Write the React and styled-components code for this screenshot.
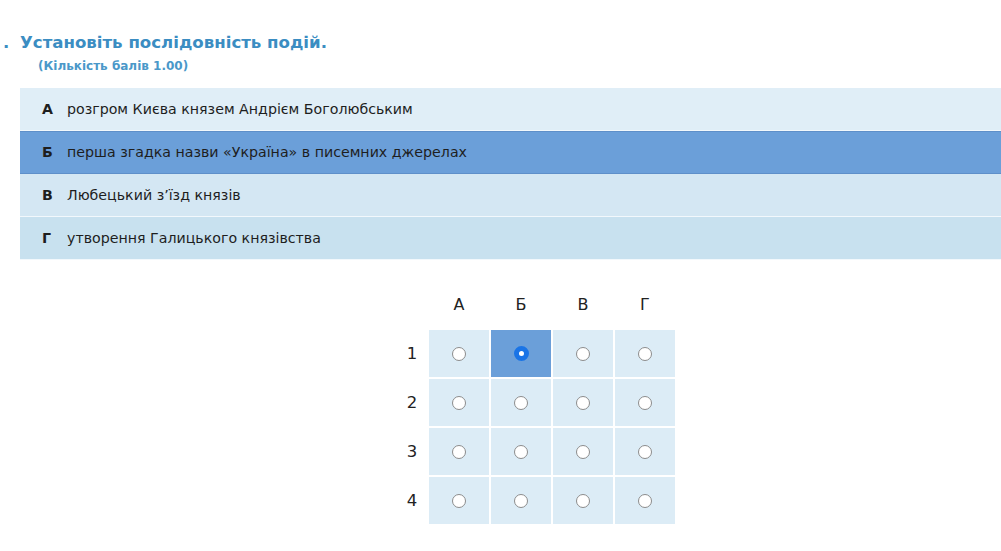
import styled, { createGlobalStyle } from "styled-components";

const GlobalStyle = createGlobalStyle`
  html, body {
    margin: 0;
    padding: 0;
    background: #fff;
    overflow: hidden;
  }
  body {
    font-family: "DejaVu Sans", Verdana, sans-serif;
    color: #222;
  }
`;

const events = [
  { letter: "А", text: "розгром Києва князем Андрієм Боголюбським", bg: "#e0eef7" },
  { letter: "Б", text: "перша згадка назви «Україна» в писемних джерелах", bg: "#6b9fd9", active: true },
  { letter: "В", text: "Любецький з’їзд князів", bg: "#d4e7f3" },
  { letter: "Г", text: "утворення Галицького князівства", bg: "#c8e1ef" },
];

const letters = ["А", "Б", "В", "Г"];
const answers = { 1: 1 };

const App = () => {
  return (
    <>
      <GlobalStyle />
      <Page>
        <Header>
          <Title>
            <Dot>.</Dot>Установіть послідовність подій.
          </Title>
          <Points>(Кількість балів 1.00)</Points>
        </Header>

        <EventList>
          {events.map((e) => (
            <EventRow key={e.letter} $bg={e.bg} $active={e.active}>
              <Letter>{e.letter}</Letter>
              <span>{e.text}</span>
            </EventRow>
          ))}
        </EventList>

        <MatrixWrap>
          <Matrix>
            <Corner />
            {letters.map((l) => (
              <ColHead key={l}>{l}</ColHead>
            ))}
            {[1, 2, 3, 4].map((n) => (
              <Row key={n} n={n} />
            ))}
          </Matrix>
        </MatrixWrap>
      </Page>
    </>
  );
};

const Row = ({ n }) => (
  <>
    <RowHead>{n}</RowHead>
    {letters.map((l, i) => {
      const on = answers[n] === i;
      return (
        <Cell key={l} $on={on}>
          <Radio $on={on} />
        </Cell>
      );
    })}
  </>
);

export default App;

// STYLING

const Page = styled.div`
  width: 1032px;
  padding: 30px 0 0 20px;
`;

const Header = styled.div`
  margin-left: -17px;
  margin-bottom: 13px;
`;

const Title = styled.h1`
  margin: 0;
  font-size: 16.6px;
  font-weight: 700;
  color: #3b8dc2;
  line-height: 26px;
`;

const Dot = styled.span`
  display: inline-block;
  width: 17px;
`;

const Points = styled.div`
  margin-left: 35px;
  margin-top: 1px;
  font-size: 12px;
  font-weight: 700;
  color: #4a98c9;
  line-height: 18px;
`;

const EventList = styled.div`
  display: flex;
  flex-direction: column;
`;

const EventRow = styled.div`
  box-sizing: border-box;
  height: 43px;
  display: flex;
  align-items: center;
  padding-left: 22px;
  font-size: 14.2px;
  background: ${(p) => p.$bg};
  border-bottom: 1px solid ${(p) => (p.$active ? "#5e8fc9" : "#f2f8fc")};
  box-shadow: ${(p) => (p.$active ? "inset 0 1px 0 #5e8fc9" : "none")};
  color: #1e1e1e;
`;

const Letter = styled.span`
  width: 25px;
  font-weight: 700;
`;

const MatrixWrap = styled.div`
  display: flex;
  justify-content: center;
  padding-top: 26px;
`;

const Matrix = styled.div`
  display: grid;
  grid-template-columns: 30px repeat(4, 60px);
  grid-template-rows: 42px repeat(4, 47px);
  gap: 2px;
`;

const Corner = styled.div``;

const ColHead = styled.div`
  display: flex;
  align-items: center;
  justify-content: center;
  padding-bottom: 5px;
  font-size: 16px;
  color: #222;
`;

const RowHead = styled.div`
  display: flex;
  align-items: center;
  justify-content: center;
  font-size: 16.5px;
  color: #222;
`;

const Cell = styled.div`
  display: flex;
  align-items: center;
  justify-content: center;
  background: ${(p) => (p.$on ? "#6b9fd9" : "#dcecf6")};
`;

const Radio = styled.span`
  box-sizing: border-box;
  width: ${(p) => (p.$on ? "15px" : "14px")};
  height: ${(p) => (p.$on ? "15px" : "14px")};
  border-radius: 50%;
  background: #fff;
  border: ${(p) => (p.$on ? "5px solid #1a74e6" : "1.5px solid #8c8c8c")};
`;
